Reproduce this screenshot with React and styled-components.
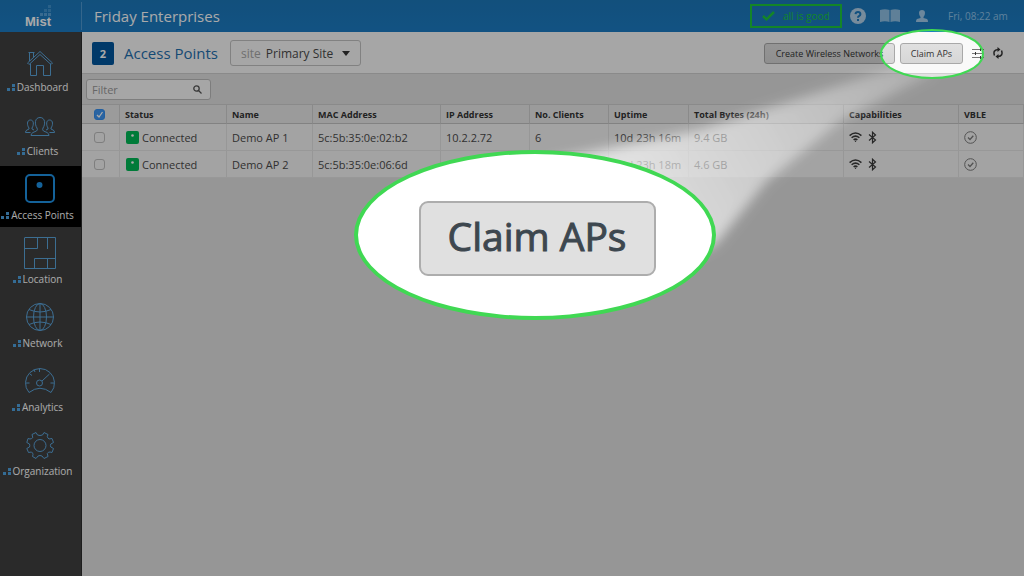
import React from 'react';
import styled, { createGlobalStyle } from 'styled-components';

const GlobalStyle = createGlobalStyle`
  * {
    box-sizing: border-box;
  }
  body {
    margin: 0;
    background: #e2e2e2;
    color: #4a4a4a;
    font-family: 'Open Sans', 'Noto Sans', sans-serif;
    font-size: 11px;
  }
  button, input, select {
    font-family: inherit;
    color: inherit;
  }
`;

const Page = styled.div`
  position: relative;
  min-height: 100vh;
  display: flex;
  flex-direction: column;
  overflow: hidden;
`;

const Header = styled.header`
  height: 32px;
  display: flex;
  align-items: center;
  background: linear-gradient(#1b78bb, #1b7cc4);
  color: #ffffff;
  .org {
    flex: 1;
    margin: 0;
    padding-left: 12px;
    font-size: 15px;
    font-weight: 400;
    line-height: 20px;
  }
  time {
    width: 86px;
    padding-left: 10px;
    font-size: 10px;
    color: #8fc3ea;
  }
`;

const Logo = styled.a`
  width: 82px;
  height: 28px;
  padding-left: 25px;
  border-right: 1px solid #4f9ad2;
  svg {
    display: block;
  }
`;

const Health = styled.div`
  width: 92px;
  height: 24px;
  display: flex;
  align-items: center;
  gap: 8px;
  padding-left: 10px;
  border: 2px solid #1ec83c;
  color: #1ec83c;
  font-size: 10px;
`;

const IconButton = styled.button`
  display: flex;
  align-items: center;
  justify-content: center;
  width: ${(p) => p.$width}px;
  height: 20px;
  padding: 0;
  border: 0;
  background: none;
  cursor: pointer;
`;

const Body = styled.div`
  flex: 1;
  display: flex;
`;

const Sidebar = styled.nav`
  width: 82px;
  flex: none;
  display: flex;
  flex-direction: column;
  gap: 3px;
  padding-top: 6px;
  background: #404040;
  border-right: 1px solid #2c2c2c;
`;

const NavItem = styled.a`
  height: 61px;
  padding: 7px 2px 0 0;
  display: flex;
  flex-direction: column;
  align-items: center;
  gap: 3px;
  color: #ffffff;
  text-decoration: none;
  background: ${(p) => (p.$active ? '#000000' : 'transparent')};
  .icon {
    width: 32px;
    height: 32px;
    fill: none;
    stroke: ${(p) => (p.$active ? '#1f93e8' : '#5ba5dc')};
    stroke-width: ${(p) => (p.$active ? 2 : 1)};
  }
  .label {
    display: flex;
    align-items: center;
    gap: 2px;
    margin-right: 4px;
    font-size: 10px;
    line-height: 15px;
    white-space: nowrap;
  }
`;

const Main = styled.main`
  flex: 1;
  min-width: 0;
`;

const Toolbar = styled.div`
  height: 42px;
  display: flex;
  align-items: center;
  padding: 1px 16px 0 10px;
  background: #f9f9f9;
  border-bottom: 1px solid #cfcfcf;
  .count {
    width: 22px;
    height: 23px;
    border-radius: 2px;
    background: #00569e;
    color: #ffffff;
    font-size: 11px;
    font-weight: 700;
    line-height: 23px;
    text-align: center;
  }
  h1 {
    margin: 0 12px 0 10px;
    font-size: 15px;
    font-weight: 400;
    line-height: 22px;
    color: #1f6fae;
  }
  .spacer {
    flex: 1;
  }
`;

const SitePicker = styled.label`
  width: 131px;
  height: 26px;
  display: flex;
  align-items: center;
  gap: 5px;
  padding: 0 10px;
  border: 1px solid #c2c2c2;
  border-radius: 3px;
  color: #a8a8a8;
  font-size: 12px;
  select {
    flex: 1;
    min-width: 0;
    padding: 0;
    border: 0;
    appearance: none;
    background: none;
    color: #4a4a4a;
    font-size: 12px;
  }
`;

const ActionButton = styled.button`
  width: ${(p) => p.$width}px;
  height: 21px;
  margin-right: 5px;
  padding: 0;
  border: 1px solid #a8a8a8;
  border-radius: 3px;
  background: linear-gradient(#e0e0e0, #d6d6d6);
  color: #333333;
  font-size: 9px;
  line-height: 19px;
  white-space: nowrap;
`;

const FilterBar = styled.div`
  height: 30px;
  padding: 5px 4px;
`;

const FilterBox = styled.label`
  width: 125px;
  height: 21px;
  display: flex;
  align-items: center;
  padding: 0 8px 0 5px;
  border: 1px solid #bcbcbc;
  border-radius: 3px;
  background: #f9f9f9;
  input {
    flex: 1;
    min-width: 0;
    padding: 0;
    border: 0;
    outline: 0;
    background: none;
    font-size: 11px;
  }
  input::placeholder {
    color: #9a9a9a;
    opacity: 1;
  }
`;

const Table = styled.table`
  width: 100%;
  table-layout: fixed;
  border-collapse: separate;
  border-spacing: 0;
  th, td {
    padding: 0 0 0 5px;
    text-align: left;
    white-space: nowrap;
    border-right: 1px solid #e3e3e3;
  }
  th {
    height: 20px;
    font-size: 9px;
    font-weight: 700;
    color: #333333;
    background: #e9e9e9;
    border-top: 1px solid #cfcfcf;
    border-right-color: #cfcfcf;
    border-bottom: 1px solid #c4c4c4;
  }
  td {
    height: 27px;
    background: #f5f5f5;
    border-bottom: 1px solid #e4e4e4;
  }
  .check {
    padding: 0 2px 0 0;
    text-align: center;
  }
  .cell {
    display: flex;
    align-items: center;
    gap: 3px;
  }
`;

const Checkbox = styled.input`
  appearance: none;
  display: block;
  width: 11px;
  height: 11px;
  margin: 0 auto;
  border: 1px solid #bdbdbd;
  border-radius: 3px;
  background: #f5f5f5;
  &:checked {
    border-color: #348ff0;
    background: #3f97f3 url("data:image/svg+xml,%3Csvg xmlns='http://www.w3.org/2000/svg' viewBox='0 0 9 9'%3E%3Cpath d='M2 5l2 2 3.5-5' fill='none' stroke='white' stroke-width='1.3'/%3E%3C/svg%3E");
  }
`;

const Shade = styled.svg`
  position: absolute;
  inset: 0;
  width: 100%;
  height: 100%;
  pointer-events: none;
`;

const Callout = styled.div`
  position: absolute;
  top: 150px;
  right: 308px;
  width: 362px;
  height: 170px;
  display: flex;
  align-items: center;
  justify-content: center;
  padding: 7px 0 0 4px;
  border: 4px solid #40d853;
  border-radius: 50%;
  background: #ffffff;
`;

const BigButton = styled.button`
  width: 237px;
  height: 75px;
  padding: 0 0 6px;
  border: 2px solid #adadad;
  border-radius: 9px;
  background: #e0e0e0;
  color: #3d474f;
  font-size: 39px;
  line-height: 48px;
  -webkit-text-stroke: 1px #3d474f;
`;

const navItems = [
  {
    label: 'Dashboard',
    icon: (
      <>
        <path d="M3.500 18L16 6.500L28.500 18L27 19.500L16 9.500L5 19.500z" />
        <path d="M6.500 18.500V30.500H12.500V20.500H19.500V30.500H26.500V18.500M5.500 16V7.500H9.500V12.500M4.500 7.500H10.500" />
      </>
    ),
  },
  {
    label: 'Clients',
    icon: (
      <>
        <path d="M7 26.500q0-2 2-3l3.500-1.500q1.500-1 .5-3c-2.500-3.500-2.500-10.500 3-10.500s5.500 7 3 10.500q-1 2 .5 3l3.500 1.500q2 1 2 3z" />
        <path d="M6.500 23.500H1.500q0-2 1.500-2.500l2-1v-1c-2-2.500-2.500-8 1.500-8c3.500 0 3.500 5 1.500 8v1l2 1" />
        <path d="M25.500 23.500h5q0-2-1.500-2.500l-2-1v-1c2-2.500 2.500-8-1.500-8c-3.500 0-3.500 5-1.500 8v1l-2 1" />
      </>
    ),
  },
  {
    label: 'Access Points',
    active: true,
    icon: (
      <>
        <rect x="2" y="2" width="28" height="27" rx="4" />
        <circle cx="15.500" cy="12" r="2" fill="#1f93e8" />
      </>
    ),
  },
  {
    label: 'Location',
    icon: (
      <path d="M1 .5H31.500V31.500H.500V.500M1 11.500H13.500V1M23.500 1V12M10.500 31V21.500H31M23.500 21.500V31" />
    ),
  },
  {
    label: 'Network',
    icon: (
      <>
        <circle cx="16" cy="16" r="13.500" />
        <ellipse cx="16" cy="16" rx="6.500" ry="13.500" />
        <path d="M16 2.500V29.500M2.500 16H29.500M5 8.500Q16 13.500 27 8.500M5 23.500Q16 18.500 27 23.500" />
      </>
    ),
  },
  {
    label: 'Analytics',
    icon: (
      <>
        <path d="M5 27.500A14.500 14.500 0 1 1 27 27.500Q16 19 5 27.500z" />
        <circle cx="15.500" cy="18" r="3" />
        <path d="M18 16L25.500 9M15.500 3.500V7M2 18H5.500M26.500 18H30M6 9L8 10.500M10 4.500L11 7" />
      </>
    ),
  },
  {
    label: 'Organization',
    icon: (
      <>
        <path d="M13.500 6L12 3.500L8 5.500L8.800 8.500Q7.500 10 6 10L4 9.500L2.800 13.500L5.500 15Q6 16.500 5.500 18L2.800 19.500L4.500 23.500L7.500 23Q9 24 9 25.500L8.500 27.500L12 29.500L14 27Q16 26 18 27L20 29.500L24 27.500L23.300 24.500Q24 23 26 23L28 23.500L29.500 19.500L26.800 18Q26 16.500 26.800 15L29.500 13.500L28 9.500L25 10Q23.500 9 23.300 7.500L24 5.500L20 3.500L18.500 6Q16 7 13.500 6z" />
        <circle cx="16" cy="16.500" r="6" />
      </>
    ),
  },
];

const accessPoints = [
  { name: 'Demo AP 1', mac: '5c:5b:35:0e:02:b2', ip: '10.2.2.72', clients: '6', uptime: '10d 23h 16m', bytes: '9.4 GB' },
  { name: 'Demo AP 2', mac: '5c:5b:35:0e:06:6d', ip: '', clients: '', uptime: '10d 23h 18m', bytes: '4.6 GB' },
];

const columns = [
  ['Status', 107],
  ['Name', 86],
  ['MAC Address', 128],
  ['IP Address', 89],
  ['No. Clients', 79],
  ['Uptime', 80],
  ['Total Bytes (24h)', 155],
  ['Capabilities', 115],
  ['VBLE'],
];

const Dots = () => (
  <svg width="8" height="7" fill="#4fa3e0">
    <path d="M0 4h3v3H0zM5 4h3v3H5zM5 0h3v3H5z" />
  </svg>
);

const MistLogo = () => (
  <svg width="30" height="28" viewBox="0 0 30 28" aria-label="Mist">
    <g fill="#6fb2e2">
      <path d="M15 11h3v3h-3zM19 11h3v3h-3zM23 11h3v3h-3z" opacity=".7" />
      <path d="M19 7h3v3h-3zM23 7h3v3h-3zM23 3h3v3h-3z" opacity=".45" />
    </g>
    <text x="0" y="24" fill="#ffffff" fontFamily="Liberation Sans, sans-serif" fontSize="13" fontWeight="700">
      Mist
    </text>
  </svg>
);

const WifiIcon = () => (
  <svg width="13" height="12" viewBox="0 0 13 12" fill="none" stroke="#3c3c3c" strokeWidth="1.500">
    <path d="M.6 4.600Q6.500-.6 12.400 4.600M2.600 6.800Q6.500 3.400 10.400 6.800M4.600 8.900Q6.500 7.300 8.400 8.900" />
    <circle cx="6.500" cy="10.300" r=".7" fill="#3c3c3c" stroke="none" />
  </svg>
);

const BluetoothIcon = () => (
  <svg width="9" height="13" viewBox="0 0 9 13" fill="none" stroke="#3c3c3c" strokeWidth="1.200">
    <path d="M1 3.500L7.500 9L4.500 11.800V1.200L7.500 4L1 9.500" />
  </svg>
);

const VbleIcon = () => (
  <svg width="13" height="13" viewBox="0 0 13 13" fill="none" stroke="#7c7c7c">
    <circle cx="6.500" cy="6.500" r="5.800" />
    <path d="M4 6.500L6 8.500L9.300 4.800" strokeWidth="1.300" />
  </svg>
);

const TopBar = () => (
  <Header>
    <Logo href="#home">
      <MistLogo />
    </Logo>
    <h2 className="org">Friday Enterprises</h2>
    <Health>
      <svg width="13" height="10" viewBox="0 0 13 10" fill="none" stroke="#1ec83c" strokeWidth="2.500">
        <path d="M1 5L4.500 8.300L12 1" />
      </svg>
      all is good
    </Health>
    <IconButton $width={32} aria-label="Help">
      <svg width="16" height="16" viewBox="0 0 16 16">
        <circle cx="8" cy="8" r="8" fill="#b3d2ea" />
        <path d="M5.500 6.200Q5.700 4 8 4t2.400 2.200Q10.400 7.400 9 8.200Q8 8.800 8 9.700" fill="none" stroke="#1b7ac0" strokeWidth="2" />
        <rect x="7" y="11" width="2" height="2" fill="#1b7ac0" />
      </svg>
    </IconButton>
    <IconButton $width={32} aria-label="Documentation">
      <svg width="20" height="14" viewBox="0 0 20 14" fill="#8fc0e4">
        <path d="M0 1Q5-.5 9.500 1V13Q5 11.500 0 13zM10.500 1Q15-.5 20 1V13Q15 11.500 10.500 13z" />
      </svg>
    </IconButton>
    <IconButton $width={32} aria-label="Account">
      <svg width="12" height="12" viewBox="0 0 12 12" fill="#a3cbea">
        <path d="M6 0Q9 0 9 3Q9 5.500 7.500 7v1L11 9q1 .5 1 3H0q0-2.500 1-3l3.500-1V7Q3 5.500 3 3Q3 0 6 0z" />
      </svg>
    </IconButton>
    <time>Fri, 08:22 am</time>
  </Header>
);

const SideNav = () => (
  <Sidebar>
    {navItems.map((item) => (
      <NavItem key={item.label} href={`#${item.label}`} $active={item.active}>
        <svg className="icon" viewBox="0 0 32 32">
          {item.icon}
        </svg>
        <span className="label">
          <Dots />
          {item.label}
        </span>
      </NavItem>
    ))}
  </Sidebar>
);

const ApTable = () => (
  <Table>
    <colgroup>
      <col width="38" />
      {columns.map(([label, width]) => (
        <col key={label} width={width} />
      ))}
    </colgroup>
    <thead>
      <tr>
        <th className="check">
          <Checkbox type="checkbox" defaultChecked aria-label="Select all" />
        </th>
        {columns.map(([label]) => (
          <th key={label}>{label}</th>
        ))}
      </tr>
    </thead>
    <tbody>
      {accessPoints.map((ap) => (
        <tr key={ap.name}>
          <td className="check">
            <Checkbox type="checkbox" aria-label={`Select ${ap.name}`} />
          </td>
          <td>
            <div className="cell">
              <svg width="14" height="13">
                <rect x="1" width="13" height="13" rx="2" fill="#00b956" />
                <circle cx="7.500" cy="4.500" r="1.300" fill="#ffffff" />
              </svg>
              Connected
            </div>
          </td>
          <td>{ap.name}</td>
          <td>{ap.mac}</td>
          <td>{ap.ip}</td>
          <td>{ap.clients}</td>
          <td>{ap.uptime}</td>
          <td>{ap.bytes}</td>
          <td>
            <div className="cell">
              <WifiIcon />
              <span />
              <BluetoothIcon />
            </div>
          </td>
          <td>
            <div className="cell">
              <VbleIcon />
            </div>
          </td>
        </tr>
      ))}
    </tbody>
  </Table>
);

// dims the page except for the spot around the Claim APs button
const Spotlight = () => (
  <Shade viewBox="0 0 1024 576" preserveAspectRatio="xMaxYMin slice" aria-hidden="true">
    <defs>
      <mask id="hole">
        <rect width="1024" height="576" fill="#ffffff" />
        <ellipse cx="932" cy="54" rx="51" ry="24" fill="#000000" />
      </mask>
      <linearGradient id="beam" gradientUnits="userSpaceOnUse" x1="900" y1="70" x2="660" y2="210">
        <stop offset="0" stopColor="#ffffff" stopOpacity="0.25" />
        <stop offset="1" stopColor="#ffffff" stopOpacity="0.66" />
      </linearGradient>
      <filter id="soft" x="-20%" y="-20%" width="140%" height="140%">
        <feGaussianBlur stdDeviation="6" />
      </filter>
    </defs>
    <g mask="url(#hole)">
      <rect width="1024" height="576" fill="#000000" fillOpacity="0.335" />
      <path d="M900 66L700 130L550 160L600 300L716 244L766 182L842 120L935 72z" fill="url(#beam)" filter="url(#soft)" />
    </g>
    <ellipse cx="932" cy="54" rx="51" ry="24" fill="none" stroke="#40d853" strokeWidth="2" />
  </Shade>
);

const App = () => (
  <>
    <GlobalStyle />
    <Page>
      <TopBar />
      <Body>
        <SideNav />
        <Main>
          <Toolbar>
            <div className="count">2</div>
            <h1>Access Points</h1>
            <SitePicker>
              site
              <select defaultValue="primary">
                <option value="primary">Primary Site</option>
              </select>
              <svg width="8" height="5" fill="#333333">
                <path d="M0 0h8L4 5z" />
              </svg>
            </SitePicker>
            <div className="spacer" />
            <ActionButton $width={131}>Create Wireless Networks</ActionButton>
            <ActionButton $width={63}>Claim APs</ActionButton>
            <IconButton $width={20} aria-label="Table settings">
              <svg width="12" height="11" viewBox="0 0 12 11" fill="none" stroke="#777777">
                <path d="M0 1.500H12M0 5.500H12M0 9.500H12" />
                <path d="M8.500 0V3M3.500 4V7M8.500 8V11" stroke="#333333" />
              </svg>
            </IconButton>
            <IconButton $width={20} aria-label="Refresh">
              <svg width="10" height="12" viewBox="0 0 10 12" fill="none" stroke="#333333" strokeWidth="1.500">
                <path d="M1.500 8.500Q-.5 3 5 2.500M8.500 3.500Q10.500 9 5 9.500" />
                <path d="M4.500 0L7.500 2.500L4.500 5zM5.500 7L2.500 9.500L5.500 12z" fill="#333333" stroke="none" />
              </svg>
            </IconButton>
          </Toolbar>
          <FilterBar>
            <FilterBox>
              <input type="text" placeholder="Filter" aria-label="Filter" />
              <svg width="9" height="9" viewBox="0 0 9 9" fill="none" stroke="#555555" strokeWidth="1.300">
                <circle cx="3.500" cy="3.500" r="2.700" />
                <path d="M5.500 5.500L8.500 8.500" />
              </svg>
            </FilterBox>
          </FilterBar>
          <ApTable />
        </Main>
      </Body>
      <Spotlight />
      <Callout>
        <BigButton>Claim APs</BigButton>
      </Callout>
    </Page>
  </>
);

export default App;
